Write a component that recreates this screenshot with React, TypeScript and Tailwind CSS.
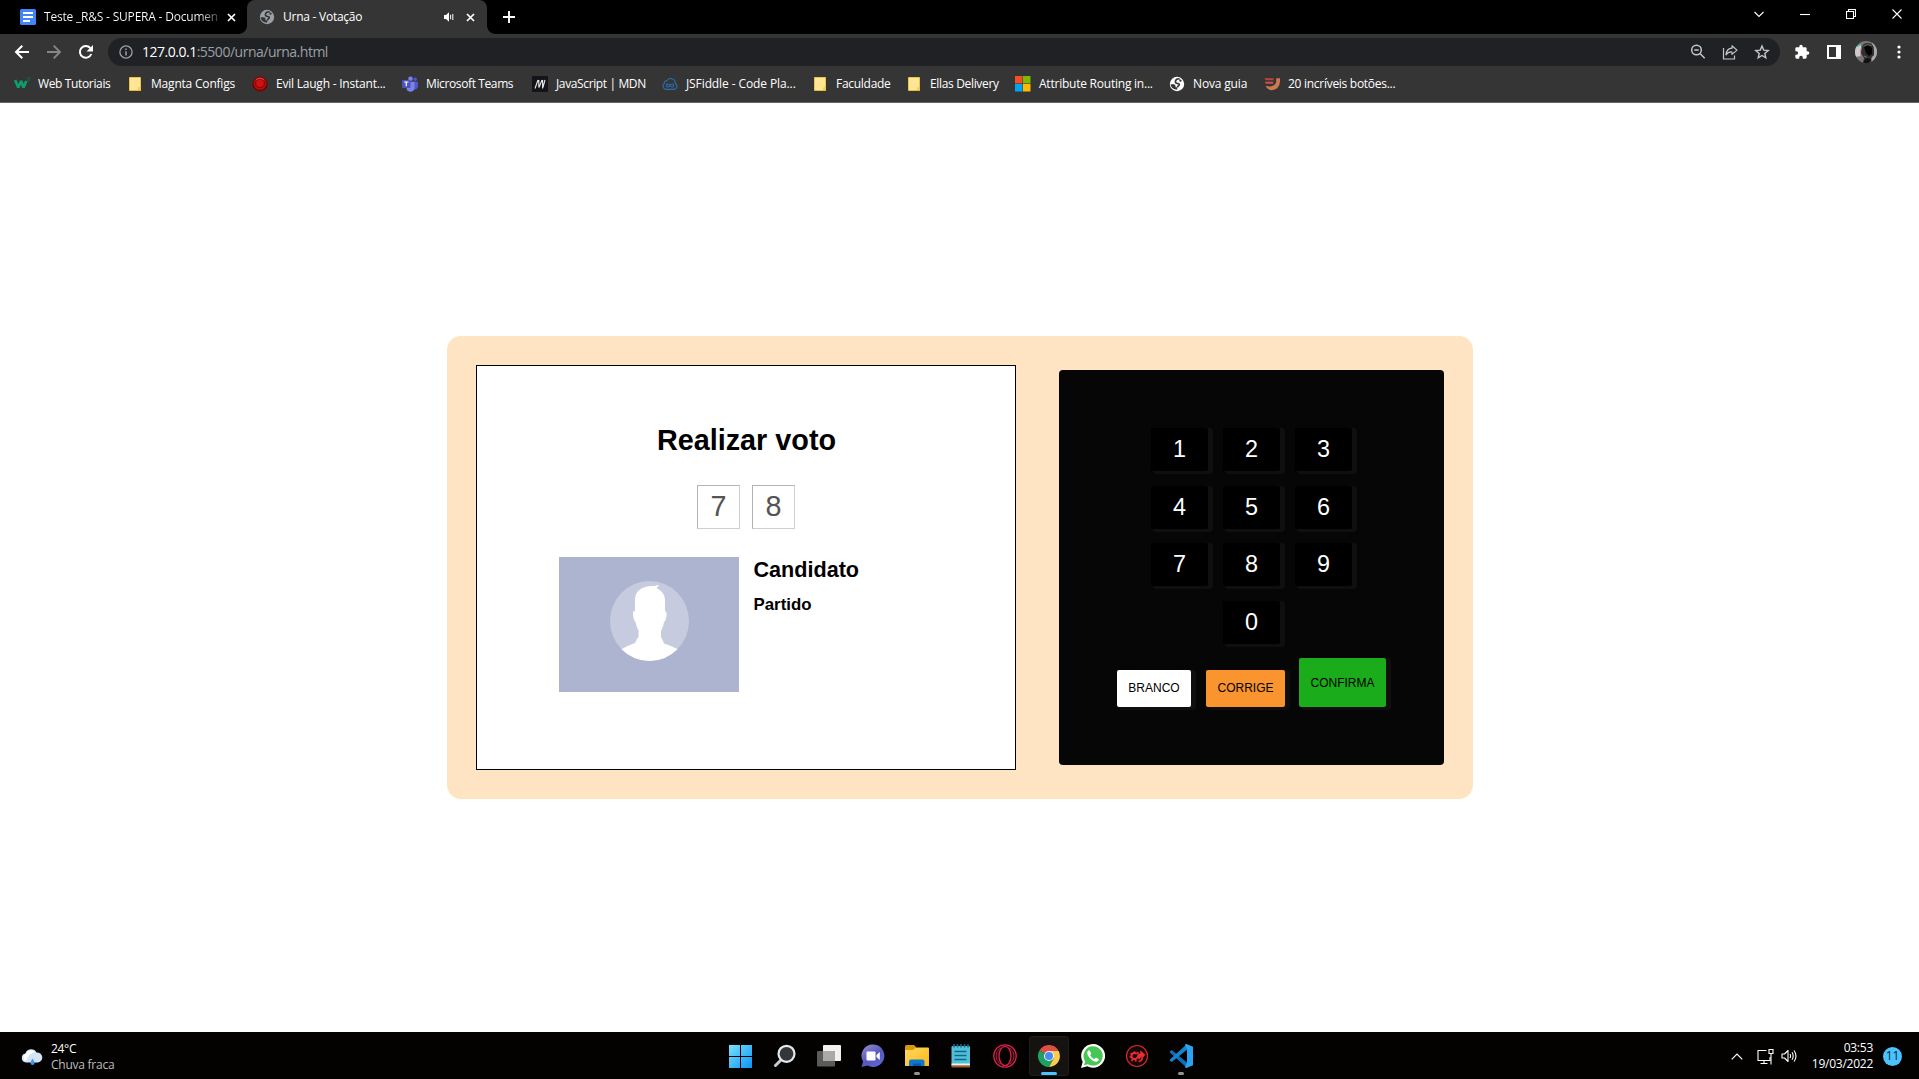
import type { ReactNode } from "react";

const ui = "font-['Open_Sans','Noto_Sans',sans-serif]";

/* ---------- browser icons ---------- */

const DocsIcon = () => (
  <svg width="16" height="16" viewBox="0 0 16 16">
    <rect width="16" height="16" rx="1.5" fill="#4285f4" />
    <path d="M3 4h10M3 8h10M3 12h7" stroke="#fff" strokeWidth="1.9" />
  </svg>
);

const Globe = ({ land, sea }: { land: string; sea: string }) => (
  <svg width="16" height="16" viewBox="0 0 16 16">
    <circle cx="8" cy="8" r="7.2" fill={sea} />
    <path
      d="M10.500 2.800C8.500 2.500 6.600 3.600 6.400 5.400 6.300 7 7.500 7.500 9 7.600c1.500.1 1.600 1.300.8 1.800-.9.500-1.300 1-1.300 2.200"
      fill="none"
      stroke={land}
      strokeWidth="1.700"
    />
    <path d="M1.500 8.300h3.300q1.700.2 1.700 1.700v1.200h1.700v2.600Q2.500 13.500 1.500 8.300z" fill={land} />
    <path d="M10.500 3q1.500.5 2.500 2l-1.500.8q-1 .3-1.200-1z" fill={land} />
  </svg>
);

const CloseX = () => (
  <svg width="9" height="9" viewBox="0 0 9 9">
    <path d="M1 1l7 7M8 1l-7 7" stroke="#fff" strokeWidth="1.7" />
  </svg>
);

const Folder = () => (
  <svg width="16" height="16" viewBox="0 0 16 16">
    <path d="M2.500 1.500h11v13h-11z" fill="#ffe694" stroke="#e9c34c" />
    <path d="M11 11.500l2.500-1v4h-2.500z" fill="#f3cf58" />
    <path d="M3 14.500h11" stroke="#e9b93c" />
  </svg>
);

const W3 = () => (
  <svg width="16" height="16" viewBox="0 0 16 16">
    <path d="M1.200 4L4.300 11.500l2.900-6.500L9.500 11.500 12.300 5" fill="none" stroke="#0f9d6b" strokeWidth="2.700" strokeLinejoin="bevel" />
    <path d="M13.300 2h2.200l-1 1.200q1.200.2.800 1.300-.7.900-2 .3" fill="none" stroke="#0c7a55" strokeWidth=".8" />
  </svg>
);

const RedButton = () => (
  <svg width="16" height="16" viewBox="0 0 16 16">
    <circle cx="8" cy="8" r="7.600" fill="#6e0707" />
    <circle cx="8" cy="7.500" r="6.300" fill="#bd0c0c" />
    <circle cx="8" cy="7.300" r="4.400" fill="#cc1313" stroke="#7d0707" strokeWidth="1" />
    <path d="M4 4q4-3.500 8 0" fill="none" stroke="#f26464" strokeWidth=".7" />
  </svg>
);

const Teams = () => (
  <svg width="16" height="16" viewBox="0 0 16 16">
    <circle cx="8.500" cy="2.700" r="2.300" fill="#7b83eb" />
    <circle cx="13.200" cy="3.300" r="1.700" fill="#5059c9" />
    <path d="M10 5.800h6v5a3 3 0 0 1-5 2z" fill="#5059c9" />
    <path d="M4.500 5.800h8v5.700a4 4 0 0 1-8 .300z" fill="#7b83eb" />
    <rect y="4" width="8.500" height="8" rx=".8" fill="#4b53bc" />
    <path d="M2.200 6h4.200M4.300 6v4.300" stroke="#fff" strokeWidth="1.200" />
  </svg>
);

const Mdn = () => (
  <svg width="16" height="16" viewBox="0 0 16 16">
    <rect width="16" height="16" fill="#15141a" />
    <path d="M3 12.500L6 4M6.800 4v7.500M7 11.500L10 4M10.600 4v8.500M10.900 11.500L13 4" fill="none" stroke="#e8e8e8" strokeWidth="1.100" />
  </svg>
);

const JsFiddle = () => (
  <svg width="16" height="16" viewBox="0 0 16 16" fill="none" stroke="#2a6fb3" strokeWidth="1.100">
    <path d="M4 13.400a3.300 3.300 0 0 1-1.600-6 2 2 0 0 1 2.300-2.500 4.600 4.600 0 0 1 8.600 2.500 3.200 3.200 0 0 1-1.300 6z" />
    <path d="M8 9.500c-1.400-2.200-3.600-1.600-3.600.1s2.200 2 3.600-.1 3.600-1.800 3.600 0-2.200 2.100-3.600 0z" />
  </svg>
);

const Microsoft = () => (
  <svg width="16" height="16" viewBox="0 0 16 16">
    <path d="M0 0h7.500v7.500H0z" fill="#f25022" />
    <path d="M8 0h7.500v7.500H8z" fill="#7fba00" />
    <path d="M0 8h7.500v7.500H0z" fill="#00a4ef" />
    <path d="M8 8h7.500v7.500H8z" fill="#ffb900" />
  </svg>
);

const JShield = () => (
  <svg width="16" height="16" viewBox="0 0 16 16">
    <path d="M0 2.200h9.500v2H2.200z" fill="#c8403f" />
    <path d="M.7 5.800h8.500v2H2z" fill="#d2504a" />
    <path d="M12.200 2.200H16v3.600Q15.300 13.800 7.500 14.200 3 13.700 1.700 9.800q8.500 2.200 10.500-3.500z" fill="#cd7a50" />
  </svg>
);

type Bookmark = { label: string; icon: ReactNode; slot: string; text: string };

const bookmarks: Bookmark[] = [
  { label: "Web Tutoriais", icon: <W3 />, slot: "w-[113px]", text: "tracking-[-0.36px]" },
  { label: "Magnta Configs", icon: <Folder />, slot: "w-[125px]", text: "tracking-[-0.2px]" },
  { label: "Evil Laugh - Instant...", icon: <RedButton />, slot: "w-[150px]", text: "tracking-[-0.22px]" },
  { label: "Microsoft Teams", icon: <Teams />, slot: "w-[130px]", text: "tracking-[-0.38px]" },
  { label: "JavaScript | MDN", icon: <Mdn />, slot: "w-[130px]", text: "tracking-[-0.37px]" },
  { label: "JSFiddle - Code Pla...", icon: <JsFiddle />, slot: "w-[150px]", text: "tracking-[-0.1px]" },
  { label: "Faculdade", icon: <Folder />, slot: "w-[94px]", text: "tracking-[-0.28px]" },
  { label: "Ellas Delivery", icon: <Folder />, slot: "w-[109px]", text: "tracking-[-0.34px]" },
  { label: "Attribute Routing in...", icon: <Microsoft />, slot: "w-[154px]", text: "tracking-[-0.23px]" },
  { label: "Nova guia", icon: <Globe land="#353535" sea="#fff" />, slot: "w-[95px]", text: "tracking-[-0.16px]" },
  { label: "20 incríveis botões...", icon: <JShield />, slot: "w-[140px]", text: "tracking-[-0.28px]" },
];

function TabStrip() {
  return (
    <div className="flex h-[34px] shrink-0 items-stretch bg-black text-[12px] text-white">
      <div className="flex w-[247px] items-center pl-5">
        <DocsIcon />
        <span className="ml-2 w-[175px] whitespace-nowrap bg-linear-to-r from-white from-88% to-[#444] bg-clip-text tracking-[-0.2px] text-transparent">
          Teste _R&amp;S - SUPERA - Documen
        </span>
        <span className="ml-[8px]"><CloseX /></span>
      </div>
      <div className="relative flex w-[240px] items-center rounded-t-lg bg-[#353535] pl-[12px]">
        <span className="absolute bottom-0 -left-2 size-2 bg-[radial-gradient(circle_at_0_0,#000_7.500px,#353535_8px)]" />
        <span className="absolute -right-2 bottom-0 size-2 bg-[radial-gradient(circle_at_100%_0,#000_7.500px,#353535_8px)]" />
        <Globe land="#353535" sea="#9aa0a6" />
        <span className="ml-2 w-[161px] whitespace-nowrap tracking-[-0.25px]">Urna - Votação</span>
        <svg width="10" height="10" viewBox="0 0 10 10">
          <path d="M0 3h2l3-2.800v9.600L2 7H0z" fill="#fff" />
          <path d="M6.600 2.800v4.400M8.800 2v6" stroke="#fff" strokeWidth="1" />
        </svg>
        <span className="ml-[12px]"><CloseX /></span>
      </div>
      <div className="flex items-center pl-4">
        <svg width="12" height="12" viewBox="0 0 12 12">
          <path d="M6 0v12M0 6h12" stroke="#fff" strokeWidth="1.900" />
        </svg>
      </div>
      <div className="ml-auto flex items-start gap-[36px] pt-[9px] pr-[17px]">
        {["M.5 3l4.500 4.500L9.500 3", "M0 5.500h10", "M.5 2.500h7v7h-7zM2.500 2.500v-2h7v7h-2", "M.5.500l9 9M9.500.500l-9 9"].map((d) => (
          <svg key={d} width="10" height="10" viewBox="0 0 10 10" fill="none" stroke="#fff" strokeWidth="1.100">
            <path d={d} />
          </svg>
        ))}
      </div>
    </div>
  );
}

function Avatar() {
  return (
    <svg width="22" height="22" viewBox="0 0 22 22">
      <defs>
        <clipPath id="face"><circle cx="11" cy="11" r="11" /></clipPath>
      </defs>
      <g clipPath="url(#face)">
        <rect width="22" height="22" fill="#777" />
        <path d="M17 0h5v22h-5z" fill="#a9a9a9" />
        <path d="M0 6l6-2v11l-6 1z" fill="#d0c9cb" />
        <path d="M1 6l5-2.500" stroke="#4ec6be" strokeWidth="1.200" />
        <path d="M5.500 8v7" stroke="#d58a95" />
        <path d="M7 7q0-5 6-5 6 0 6 7v5l-3 3v5H8l1-5-3-5z" fill="#303030" />
        <path d="M9 6q4-3.500 8 1v6l-3 2-3-3z" fill="#050505" />
        <path d="M8.500 5.500q3.500-3.500 8-1" stroke="#6b6b6b" fill="none" />
        <path d="M9 15l3 1.500M11 19h4" stroke="#777" fill="none" />
        <path d="M11 17l5 1-2 4H8z" fill="#101010" />
      </g>
    </svg>
  );
}

function Toolbar() {
  return (
    <div className="flex h-9 shrink-0 items-center bg-[#353535]">
      <div className="flex w-[108px] items-center pl-[14px]">
        <svg width="16" height="16" viewBox="0 0 16 16" fill="none" stroke="#fff" strokeWidth="2">
          <path d="M15 8H2.500M8.300 1.700L2 8l6.300 6.300" />
        </svg>
        <svg className="ml-4" width="16" height="16" viewBox="0 0 16 16" fill="none" stroke="#868686" strokeWidth="1.900">
          <path d="M1 8h12.500M7.700 1.700L14 8l-6.300 6.300" />
        </svg>
        <svg className="ml-4" width="16" height="16" viewBox="0 0 16 16">
          <path d="M13.300 10A5.900 5.900 0 1 1 12.300 4" fill="none" stroke="#fff" strokeWidth="2" />
          <path d="M15 1v6.500H8.500z" fill="#fff" />
        </svg>
      </div>
      <div className="flex h-7 w-[1672px] items-center rounded-full bg-[#202124] pr-[10px] pl-[11px] text-[14px]">
        <svg width="14" height="14" viewBox="0 0 14 14" fill="none" stroke="#9aa0a6" strokeWidth="1.300">
          <circle cx="7" cy="7" r="6.100" />
          <path d="M7 6.200v4.300M7 3.500v1.500" strokeWidth="1.500" />
        </svg>
        <span className="ml-[9px] pb-[2px] tracking-[-0.49px] whitespace-nowrap text-white">
          127.0.0.1<span className="text-[#9aa0a6]">:5500/urna/urna.html</span>
        </span>
        <div className="ml-auto flex items-center gap-4 text-[#c4c7c9]">
          <svg width="16" height="16" viewBox="0 0 16 16" fill="none" stroke="currentColor" strokeWidth="1.500">
            <circle cx="6.500" cy="6" r="4.800" />
            <path d="M10 9.500l4.700 4.700M4.300 6h4.400" />
          </svg>
          <svg width="16" height="16" viewBox="0 0 16 16" fill="none" stroke="currentColor" strokeWidth="1.200">
            <path d="M1.500 4v11h11v-3.500" />
            <path d="M10 1.800l5 4.300-5 4.300V8Q6 7.700 4 10.800 4.500 4.600 10 4.200z" strokeLinejoin="round" />
          </svg>
          <svg width="16" height="16" viewBox="0 0 16 16" fill="none" stroke="currentColor" strokeWidth="1.400">
            <path d="M8 2l1.700 4.100 4.500.4-3.400 2.900 1 4.400L8 11.500l-3.800 2.300 1-4.400L1.800 6.500l4.500-.4z" />
          </svg>
        </div>
      </div>
      <svg className="ml-[14px]" width="16" height="16" viewBox="0 0 24 24" fill="#fff">
        <path d="M20.500 11H19V7c0-1.100-.9-2-2-2h-4V3.500a2.500 2.500 0 0 0-5 0V5H4a2 2 0 0 0-2 2v3.800h1.500a2.700 2.700 0 0 1 0 5.400H2V20c0 1.100.9 2 2 2h3.800v-1.500a2.700 2.700 0 0 1 5.400 0V22H17a2 2 0 0 0 2-2v-4h1.500a2.500 2.500 0 0 0 0-5z" />
      </svg>
      <svg className="ml-[17px]" width="14" height="14" viewBox="0 0 14 14">
        <path d="M0 0h14v14H0zM2 2v10h7V2z" fill="#fff" fillRule="evenodd" />
      </svg>
      <span className="ml-[14px]"><Avatar /></span>
      <svg className="ml-5" width="4" height="14" viewBox="0 0 4 14" fill="#fff">
        <circle cx="2" cy="2" r="1.600" />
        <circle cx="2" cy="7" r="1.600" />
        <circle cx="2" cy="12" r="1.600" />
      </svg>
    </div>
  );
}

function BookmarksBar() {
  return (
    <div className="flex h-[33px] shrink-0 items-center border-b border-[#636363] bg-[#353535] pb-1 pl-[14px] text-[12px] text-white">
      {bookmarks.map((b) => (
        <div key={b.label} className={`flex shrink-0 items-center gap-2 whitespace-nowrap ${b.slot}`}>
          {b.icon}
          <span className={b.text}>{b.label}</span>
        </div>
      ))}
    </div>
  );
}

/* ---------- voting page ---------- */

const shadow = "shadow-[3.500px_1.500px_0_1.500px_#100e0e]";

function Portrait() {
  return (
    <svg width="180" height="135" viewBox="0 0 180 135" className="bg-[#adb4cf]">
      <defs>
        <clipPath id="disc"><ellipse cx="90.500" cy="64" rx="39.500" ry="40" /></clipPath>
      </defs>
      <ellipse cx="90.500" cy="64" rx="39.500" ry="40" fill="#c6cbe0" />
      <path
        clipPath="url(#disc)"
        fill="#fff"
        d="M76 52V42C76 34 84 29 92 29C95 29 98 28.500 100 28C99 29.500 98.500 30 97.500 31C103 34 106 38 106 43V54C108 55 108 58 107 61C106.500 64 105.500 65 105 65C104.500 69 103 72 102 74V80C103 82 104 84 105 86.500C110 88 115 90 119 92.500V106H62V92.500C66 90 71 88 76 86C77 84 77.500 82 79.500 80V73C78 71 77 68 76.500 65C74.500 63 74 60 74 56C74 54.500 75 54 76 54Z"
      />
    </svg>
  );
}

function VotingScreen() {
  return (
    <section className="flex h-[405px] w-[540px] flex-col items-center border border-black bg-white pt-[56px]">
      <h1 className="pl-[2px] text-[28.800px] leading-[36px] font-bold">Realizar voto</h1>
      <div className="mt-[27px] flex gap-3">
        {["7", "8"].map((n) => (
          <div
            key={n}
            className="flex h-[44px] w-[43px] items-center justify-center border border-t-[#b4b4b4] border-r-[#cfcfcf] border-b-[#cfcfcf] border-l-[#b4b4b4] pb-[2px] pl-[1px] text-[28.800px] leading-none text-[#545454]"
          >
            {n}
          </div>
        ))}
      </div>
      <div className="mt-7 flex w-full gap-[15px] pl-[82px]">
        <Portrait />
        <div>
          <h2 className="text-[21.600px] leading-[25px] font-bold">Candidato</h2>
          <h3 className="mt-[13px] text-[16.850px] leading-5 font-bold">Partido</h3>
        </div>
      </div>
    </section>
  );
}

function Keypad() {
  const keys = ["1", "2", "3", "4", "5", "6", "7", "8", "9", "0"];
  return (
    <section className="flex h-[395px] w-[385px] flex-col rounded bg-[#060606] pt-[58px]">
      <div className="ml-[92px] grid w-[201px] grid-cols-3 gap-x-[15px] gap-y-[14.600px]">
        {keys.map((k) => (
          <button
            key={k}
            className={`h-[43px] rounded-[2px] bg-black pt-[1px] pl-[1px] text-[23.400px] leading-none text-white last:col-start-2 ${shadow}`}
          >
            {k}
          </button>
        ))}
      </div>
      <div className="mt-[14px] ml-[58px] flex items-end text-[12px] text-black">
        <button className={`h-[37px] w-[74px] rounded-[2px] bg-white pl-[1px] ${shadow}`}>BRANCO</button>
        <button className={`ml-[15px] h-[37px] w-[79px] rounded-[2px] bg-[#f9942e] pl-[1px] ${shadow}`}>CORRIGE</button>
        <button className={`ml-[14px] h-[49px] w-[87px] rounded-[2px] bg-[#1aac1a] pt-[1px] pl-[1px] ${shadow}`}>CONFIRMA</button>
      </div>
    </section>
  );
}

/* ---------- taskbar ---------- */

const apps: { id: string; icon: ReactNode; mark?: "open" | "active" }[] = [
  {
    id: "start",
    icon: (
      <svg width="24" height="24" viewBox="0 0 24 24">
        <defs>
          <linearGradient id="win" x1="0" y1="0" x2="1" y2="1">
            <stop offset="0" stopColor="#7ae2fb" />
            <stop offset="1" stopColor="#0a93f5" />
          </linearGradient>
        </defs>
        <path d="M0 1h11v11H0zM12 1h11v11H12zM0 13h11v11H0zM12 13h11v11H12z" fill="url(#win)" />
      </svg>
    ),
  },
  {
    id: "search",
    icon: (
      <svg width="24" height="24" viewBox="0 0 24 24">
        <path d="M8 16l-5.500 5.500" stroke="#c9cdd0" strokeWidth="3" strokeLinecap="round" />
        <circle cx="13.500" cy="9.800" r="8" fill="#33373a" stroke="#e6e8ea" strokeWidth="2.200" />
      </svg>
    ),
  },
  {
    id: "tasks",
    icon: (
      <svg width="24" height="24" viewBox="0 0 24 24">
        <rect x="6" y="1" width="18" height="16" rx="1" fill="#f1f1f1" />
        <rect x="0" y="7" width="18" height="15.500" rx="1" fill="#5b5b5b" />
        <path d="M6 7h12v10H6z" fill="#a9a9a9" />
      </svg>
    ),
  },
  {
    id: "chat",
    icon: (
      <svg width="24" height="24" viewBox="0 0 24 24">
        <defs>
          <linearGradient id="chat" x1="0" y1="0" x2=".7" y2="1">
            <stop offset="0" stopColor="#9a8fd0" />
            <stop offset=".6" stopColor="#5558bd" />
            <stop offset="1" stopColor="#5e66d8" />
          </linearGradient>
        </defs>
        <path d="M12 .5a11.200 11.200 0 1 1-5.300 21L.5 23l1.600-5.600A11.200 11.200 0 0 1 12 .5z" fill="url(#chat)" />
        <rect x="5.500" y="7.500" width="9" height="9" rx="1" fill="#fff" />
        <path d="M15.500 11l3.300-3v8l-3.300-3z" fill="#fff" />
      </svg>
    ),
  },
  {
    id: "files",
    mark: "open",
    icon: (
      <svg width="24" height="24" viewBox="0 0 24 24">
        <defs>
          <linearGradient id="dir" x1="0" y1="0" x2="1" y2="1">
            <stop offset="0" stopColor="#ffd862" />
            <stop offset="1" stopColor="#fbb916" />
          </linearGradient>
        </defs>
        <path d="M0 2.500q0-1.500 1.500-1.500H9l2 2v4H0z" fill="#d99a09" />
        <path d="M0 6h8l3-2.500h12q1 0 1 1V22H0z" fill="url(#dir)" />
        <path d="M4 22v-4.500q0-2 2-2h11.500q2 0 2 2V22z" fill="#0f78cc" />
        <path d="M8 19.500h8V22H8z" fill="#075ba5" />
      </svg>
    ),
  },
  {
    id: "notes",
    icon: (
      <svg width="24" height="24" viewBox="0 0 24 24">
        <rect x="2.500" y="2" width="18.500" height="20" rx="1" fill="#52bfd9" />
        <path d="M2.500 19.500H21v2H2.500z" fill="#f0f0f0" />
        <path d="M2.500 22.500H21" stroke="#a65818" strokeWidth="2" />
        <path d="M5 0v3.500M8.500 0v3.500M12 0v3.500M15.500 0v3.500M19 0v3.500" stroke="#156f8e" strokeWidth="1.500" />
        <path d="M5.500 7.500h12M5.500 11.500h12M5.500 15.500h12" stroke="#0e6a88" strokeWidth="1.600" />
      </svg>
    ),
  },
  {
    id: "opera",
    icon: (
      <svg width="24" height="24" viewBox="0 0 24 24" fill="none" stroke="#d81e49">
        <circle cx="12" cy="12" r="11.200" strokeWidth="1.300" />
        <ellipse cx="12" cy="12" rx="6" ry="9.600" strokeWidth="1.400" />
        <path d="M7.500 3.800Q3 7 3 12t4.500 8.200M16.500 3.800Q21 7 21 12t-4.500 8.200" strokeWidth=".9" />
      </svg>
    ),
  },
  {
    id: "chrome",
    mark: "active",
    icon: (
      <svg width="22" height="22" viewBox="0 0 24 24">
        <path d="M12 12L1.600 6A12 12 0 0 1 22.400 6z" fill="#dd4f43" />
        <path d="M12 12l5.200 3L12 24A12 12 0 0 1 1.600 6z" fill="#1da261" />
        <path d="M12 6.500h10.600A12 12 0 0 1 12 24l5-9z" fill="#fccd46" />
        <circle cx="12" cy="12" r="5.500" fill="#f2f2f2" />
        <circle cx="12" cy="12" r="4.400" fill="#4a8af4" />
      </svg>
    ),
  },
  {
    id: "whatsapp",
    icon: (
      <svg width="24" height="24" viewBox="0 0 24 24">
        <path d="M12 0a11.900 11.900 0 1 1-5.600 22.300L0 24l1.700-6.200A11.900 11.900 0 0 1 12 0z" fill="#fff" />
        <path d="M12 2.200a9.700 9.700 0 1 1-5 18L3 21.200 4.100 17.200A9.700 9.700 0 0 1 12 2.200z" fill="#45c655" />
        <path
          d="M8.600 6.700c-.4-.5-1-.4-1.500.1-1.500 1.600-.9 3.800.8 6.100 2 2.700 4.200 4.400 6.900 4.800 1.600.2 2.900-.9 3-2.500 0-.5-2.700-1.900-3.100-1.500l-1.200 1.400c-1.900-.7-3.300-2-4.300-3.800l1-1.300c.2-.5-1-2.600-1.600-3.300z"
          fill="#fff"
        />
      </svg>
    ),
  },
  {
    id: "gear",
    icon: (
      <svg width="24" height="24" viewBox="0 0 24 24" fill="none" stroke="#ec2d31">
        <circle cx="12" cy="12" r="10.500" fill="#160606" stroke="#d42a2e" strokeWidth="1.200" />
        <path d="M11.800 10.200a3 3 0 1 0 .3 3.300" strokeWidth="2" />
        <path d="M9.500 9.500V7.300M7.300 10.500L5.500 9.200M6.800 13H4.500M7.800 15.200l-1.300 1.700M10.500 15.500l.5 2M12.300 9.500l1-1.500" strokeWidth="1.700" />
        <path d="M11.500 13.500l1.500-4h2.300V6.300l5 4.500-2.800 3.400-1-1.700-2 2.700z" fill="#ec2d31" stroke="none" />
        <path d="M17 13q.8 3.500-3.300 4.700" strokeWidth="1.700" />
      </svg>
    ),
  },
  {
    id: "code",
    mark: "open",
    icon: (
      <svg width="24" height="24" viewBox="0 0 24 24">
        <path d="M1 7.200l1.700-1.300 15.300 12.500V24L.9 8.600Q.4 7.800 1 7.200z" fill="#0d6fb8" />
        <path d="M1 16.800l1.700 1.300L18 5.700V0L.9 15.400q-.5.800.1 1.400z" fill="#1584cf" />
        <path d="M17.500 0L24 2.800v18.400L17.500 24q-1 .2-1.500-.9l2-4.900V5.800L16 .9q.5-1.100 1.500-.9z" fill="#2aa3f0" />
      </svg>
    ),
  },
];

function Taskbar() {
  return (
    <footer className="flex h-[47px] shrink-0 items-stretch bg-[#030201] text-[12px] text-white">
      <div className="flex w-[719px] items-center pt-[2px] pl-[21px]">
        <svg width="22" height="18" viewBox="0 0 22 18">
          <path d="M5 14.500a4.500 4.500 0 0 1-.6-8.900A6 6 0 0 1 15.500 4.500a5 5 0 0 1 1.500 10z" fill="#d3e4f4" />
          <path d="M5 13a4 4 0 0 1 0-7.500A5.500 5.500 0 0 1 14 4Q8 5 5 13z" fill="#fff" />
          <path d="M11.500 10.500q2 3 2 4.500a2 2 0 0 1-4 0q0-1.500 2-4.500z" fill="#3e9ae8" />
        </svg>
        <div className="ml-2 leading-4">
          <div className="tracking-[-0.3px]">24°C</div>
          <div className="tracking-[-0.25px] text-[#bdbdbc]">Chuva fraca</div>
        </div>
      </div>
      <div className="flex items-center">
        {apps.map((a) => (
          <div key={a.id} className="flex w-11 justify-center">
            <div
              className={
                a.mark === "active"
                  ? "relative flex size-10 items-center justify-center rounded bg-[#151312] ring-1 ring-[#1f1d1c] ring-inset"
                  : "relative flex size-10 items-center justify-center"
              }
            >
              {a.icon}
              {a.mark === "active" && <span className="absolute bottom-[1px] h-[3px] w-4 rounded-full bg-[#4cc2ff]" />}
              {a.mark === "open" && <span className="absolute bottom-[1px] h-[3px] w-[6px] rounded-full bg-[#949494]" />}
            </div>
          </div>
        ))}
      </div>
      <div className="ml-auto flex items-center pt-[1px] pr-[17px]">
        <svg width="12" height="7" viewBox="0 0 12 7" fill="none" stroke="#fff" strokeWidth="1.200">
          <path d="M.7 6.300L6 1l5.300 5.300" />
        </svg>
        <svg className="ml-[14px]" width="17" height="17" viewBox="0 0 17 17" fill="none" stroke="#fff" strokeWidth="1.100">
          <path d="M9.500 2.500h-8.500v10h12V9M7 12.500v3M3.500 15.500h7" />
          <path d="M12 1.500h4v4h-4zM14 5.500v11" />
        </svg>
        <svg className="ml-[7px]" width="17" height="14" viewBox="0 0 17 14" fill="none" stroke="#fff" strokeWidth="1.100">
          <path d="M1 5h2.500L7 1.500v11L3.500 9H1z" strokeLinejoin="round" />
          <path d="M9 5q1.200 2 0 4M11 3.300q2.400 3.700 0 7.400M13 1.500q4 5.500 0 11" />
        </svg>
        <div className="ml-[10px] w-[65px] text-right leading-4 tracking-[-0.25px] whitespace-nowrap">
          <div>03:53</div>
          <div>19/03/2022</div>
        </div>
        <span className="ml-[10px] flex size-[19px] items-center justify-center rounded-full bg-[#4cc2ff] text-[12px] text-[#06293c]">11</span>
      </div>
    </footer>
  );
}

export default function App() {
  return (
    <div className={`flex h-[1079px] w-[1919px] flex-col overflow-hidden bg-white ${ui}`}>
      <TabStrip />
      <Toolbar />
      <BookmarksBar />
      <main className="flex flex-1 items-center justify-center font-['Liberation_Sans',Arial,sans-serif] text-black">
        <div className="flex h-[463px] w-[1026px] items-center justify-between rounded-[14px] bg-[#ffe4c4] px-[29px]">
          <VotingScreen />
          <Keypad />
        </div>
      </main>
      <Taskbar />
    </div>
  );
}
